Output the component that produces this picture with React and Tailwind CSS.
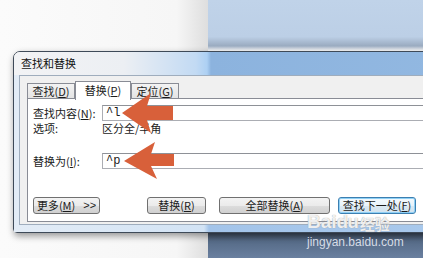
// App.jsx
const cjk = "font-['Noto_Sans_CJK_SC',sans-serif]";

function Key({ k }) {
  return (
    <span>
      (<span className="underline">{k}</span>)
    </span>
  );
}

function Tab({ label, k, active }) {
  return active ? (
    <div className="relative z-10 -mb-px flex h-[19px] w-[56px] items-center justify-center border border-b-0 border-[#898c95] bg-white pb-px">
      {label}
      <Key k={k} />
    </div>
  ) : (
    <div className="flex h-[16px] w-[48px] items-center justify-center border border-b-0 border-[#898c95] bg-[linear-gradient(#f3f3f3,#e3e3e3)]">
      {label}
      <Key k={k} />
    </div>
  );
}

function Btn({ children, className, focus }) {
  const base =
    "flex h-[17px] items-center justify-center rounded-[3px] border text-[11px] leading-none";
  const look = focus
    ? "border-[#3c7fb1] bg-[linear-gradient(#f4fafe,#e9f3fa_50%,#dbe9f3_50%,#d2e3ef)] shadow-[inset_0_0_0_1px_#8fd0f5]"
    : "border-[#707070] bg-[linear-gradient(#f3f3f3,#ebebeb_50%,#dddddd_50%,#d0d0d0)]";
  return <div className={`${base} ${look} ${className}`}>{children}</div>;
}

export default function App() {
  return (
    <div className={`relative flex h-[258px] w-[423px] overflow-hidden ${cjk} text-[11px] text-[#1b1b1b]`}>
      {/* desktop behind the dialog */}
      <div className="h-full w-[208px] bg-[linear-gradient(90deg,#fbfbfb,#f6f6f6_85%,#dedede)]" />
      <div className="flex flex-1 flex-col">
        <div className="h-[51px] bg-[linear-gradient(180deg,#c0d3e9,#bccfe6_72%,#9aabc0_90%,#46536400)]" />
        <div className="flex-1 bg-[#9fc0e6]" />
        <div className="h-[26px] bg-[linear-gradient(180deg,#3b4758,#566b87_35%,#6a80a0)]" />
      </div>

      {/* dialog window */}
      <div className="absolute left-[13px] top-[51px] flex w-[440px] flex-col rounded-tl-[7px] rounded-bl-[4px] border border-[#3e4a58] shadow-[1px_3px_7px_rgba(0,0,0,0.4)]">
        <div className="flex h-[23px] items-center rounded-tl-[6px] bg-[linear-gradient(90deg,#f2f3f5,#eceff3_110px,#c2daf3_182px,#add0f3_193px,#8cb3de_197px,#92b8e1)] pl-[7px] text-[11px] text-[#111]">
          查找和替换
        </div>

        <div className="flex bg-[linear-gradient(90deg,#e3ecf6,#d2e3f5_190px,#a3c4ea_195px,#a9c9ec)] pb-[7px] pl-[5px]">
          <div className="flex flex-1 flex-col border border-r-0 border-[#9fadbd] bg-[#f0f0f0] pb-[2px] pl-[7px] pt-[4px]">
            <div className="flex h-[19px] items-end">
              <Tab label="查找" k="D" />
              <Tab label="替换" k="P" active />
              <Tab label="定位" k="G" />
            </div>

            <div className="-mt-px flex flex-col border border-r-0 border-[#898c95] bg-white pb-[7px] pl-[5px] pt-[6px]">
              <div className="flex h-[16px] items-center">
                <div className="w-[69px]">
                  查找内容<Key k="N" />:
                </div>
                <div className="flex h-[16px] flex-1 items-center border border-[#abadb3] border-t-[#8e9197] pl-[3px] font-['Liberation_Mono',monospace] text-[12px]">
                  ^l
                </div>
              </div>
              <div className="flex h-[14px] items-center">
                <div className="w-[69px]">选项:</div>
                <div>区分全/半角</div>
              </div>
              <div className="mt-[18px] flex h-[16px] items-center">
                <div className="w-[69px]">
                  替换为<Key k="I" />:
                </div>
                <div className="flex h-[16px] flex-1 items-center border border-[#abadb3] border-t-[#8e9197] pl-[3px] font-['Liberation_Mono',monospace] text-[12px]">
                  ^p
                </div>
              </div>
              <div className="mt-[28px] flex">
                <Btn className="w-[67px]">
                  更多<Key k="M" />
                  <span className="ml-[8px] font-['Liberation_Sans',sans-serif]">&gt;&gt;</span>
                </Btn>
                <Btn className="ml-[47px] w-[59px]">
                  替换<Key k="R" />
                </Btn>
                <Btn className="ml-[13px] w-[111px]">
                  全部替换<Key k="A" />
                </Btn>
                <Btn className="ml-[8px] w-[78px]" focus>
                  查找下一处<Key k="F" />
                </Btn>
              </div>
            </div>
          </div>
        </div>
      </div>

      {/* annotation arrows */}
      <svg className="absolute left-0 top-0" width="423" height="258" viewBox="0 0 423 258">
        <polygon
          points="122,113 151,93 147,106 173,106 173,120 147,120 151,133"
          fill="#d8603a"
        />
        <polygon
          points="124,161 155,142 151,154 174,154 174,166 151,166 157,179"
          fill="#d8603a"
        />
      </svg>

      {/* watermark */}
      <div className="absolute left-[307px] top-[212px] flex flex-col items-start text-white">
        <div className="flex items-end font-['Liberation_Sans',sans-serif] text-[19px] font-bold leading-none text-white/85 [text-shadow:0_0_1px_#8a8a8a]">
          <span>Bai</span>
          <span className="tracking-[-1px]">du</span>
          <span className={`${cjk} ml-[2px] text-[15px] font-bold`}>经验</span>
        </div>
        <div className="mt-[5px] font-['Liberation_Sans',sans-serif] text-[12px] leading-none text-[#d6dce6]">
          jingyan.baidu.com
        </div>
      </div>
    </div>
  );
}
